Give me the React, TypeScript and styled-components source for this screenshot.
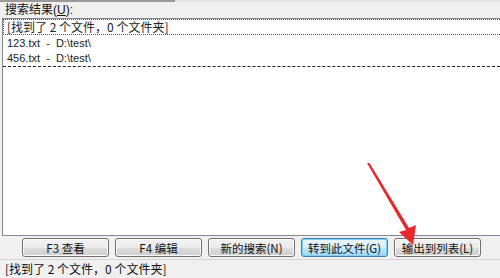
import styled, { createGlobalStyle } from 'styled-components';

const GlobalStyle = createGlobalStyle`
  html, body {
    margin: 0;
    padding: 0;
    background: #f0f0f0;
  }
  body {
    font-family: "Liberation Sans", "Noto Sans CJK SC", sans-serif;
    font-size: 11px;
    color: #000;
  }
`;

const Window = styled.div`
  position: relative;
  width: 500px;
  height: 278px;
  overflow: hidden;
  display: flex;
  flex-direction: column;
  background: #f0f0f0;
`;

const TopEdge = styled.div`
  display: flex;
  height: 3px;
`;

const TopEdgePart = styled.div<{ $w?: number; $color: string }>`
  height: 2px;
  width: ${(p) => (p.$w ? `${p.$w}px` : 'auto')};
  flex: ${(p) => (p.$w ? 'none' : '1')};
  background: ${(p) => p.$color};
`;

const Label = styled.div`
  height: 15px;
  line-height: 15px;
  padding-left: 5px;
  font-size: 12px;
  color: #111;
`;

const ListBox = styled.div`
  margin-left: 2px;
  height: 217px;
  border: 1px solid #828790;
  border-right: none;
  background: #fff;
  display: flex;
  flex-direction: column;
`;

const Row = styled.div<{ $focus?: boolean }>`
  height: ${(p) => (p.$focus ? 16 : 15)}px;
  line-height: ${(p) => (p.$focus ? 14 : 15)}px;
  padding-left: 3px;
  white-space: pre;
  font-size: 11px;
  color: #222;
  border: 1px dotted ${(p) => (p.$focus ? '#555' : 'transparent')};
  border-right: none;
  box-sizing: border-box;
`;

const CnText = styled.span`
  font-family: "Noto Sans CJK SC", sans-serif;
  font-size: 12px;
`;

const Divider = styled.div`
  margin-top: 1px;
  border-top: 1px dashed #222;
`;

const ButtonBar = styled.div`
  display: flex;
  gap: 6px;
  padding: 2px 0 0 22px;
  height: 22px;
  box-sizing: border-box;
`;

const Button = styled.div<{ $default?: boolean }>`
  width: 87px;
  height: 19px;
  box-sizing: border-box;
  border: 1px solid ${(p) => (p.$default ? '#3c7fb1' : '#707070')};
  border-radius: 3px;
  background: ${(p) =>
    p.$default
      ? 'linear-gradient(#eaf6fd 0%, #d9f0fc 50%, #bee6fd 51%, #a7d9f5 100%)'
      : 'linear-gradient(#f2f2f2 0%, #ebebeb 50%, #dddddd 51%, #cfcfcf 100%)'};
  box-shadow: inset 0 0 0 1px ${(p) => (p.$default ? '#7fd0f5' : '#fcfcfc')};
  display: flex;
  align-items: center;
  justify-content: center;
  font-family: "Noto Sans CJK SC", sans-serif;
  font-size: 11.5px;
  color: #111;
`;

const StatusBar = styled.div`
  margin-top: 1px;
  height: 18px;
  line-height: 18px;
  padding-left: 5px;
  border-top: 1px solid #d5d5d5;
  font-family: "Noto Sans CJK SC", sans-serif;
  font-size: 12px;
  color: #111;
`;

const BottomEdge = styled.div`
  flex: 1;
  background: #3a3a3a;
`;

const Arrow = styled.svg`
  position: absolute;
  left: 0;
  top: 0;
  pointer-events: none;
`;

export default function App(): JSX.Element {
  return (
    <Window>
      <GlobalStyle />
      <TopEdge>
        <TopEdgePart $w={175} $color="#9a9a9a" />
        <TopEdgePart $color="#e4e4e4" />
      </TopEdge>
      <Label>搜索结果(<u>U</u>):</Label>
      <ListBox>
        <Row $focus>
          <CnText>[找到了 2 个文件，0 个文件夹]</CnText>
        </Row>
        <Row>123.txt  -  D:\test\</Row>
        <Row>456.txt  -  D:\test\</Row>
        <Divider />
      </ListBox>
      <ButtonBar>
        <Button>F3 查看</Button>
        <Button>F4 编辑</Button>
        <Button>新的搜索(N)</Button>
        <Button $default>转到此文件(G)</Button>
        <Button>输出到列表(L)</Button>
      </ButtonBar>
      <StatusBar>[找到了 2 个文件，0 个文件夹]</StatusBar>
      <BottomEdge />
      <Arrow width="500" height="278" viewBox="0 0 500 278">
        <polygon
          points="367,163 369.5,163 409,228 416,225 413,245 399,232 406,230"
          fill="#e8262b"
        />
      </Arrow>
    </Window>
  );
}
